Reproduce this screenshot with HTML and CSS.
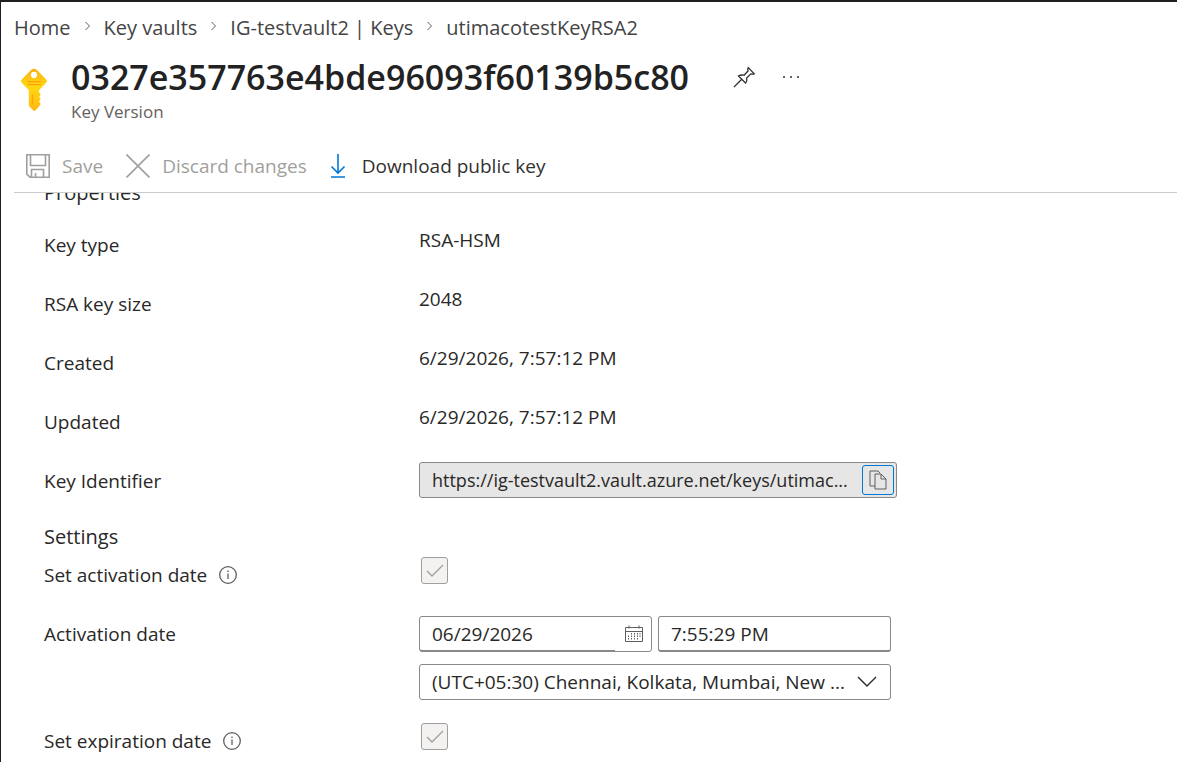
FILE: index.html
```html
<!DOCTYPE html>
<html lang="en">
<head>
<meta charset="utf-8">
<meta name="viewport" content="width=device-width, initial-scale=1">
<title>Key Version</title>
<link rel="stylesheet" href="styles.css">
</head>
<body>
<nav class="breadcrumb" aria-label="Breadcrumb">
  <a href="#">Home</a>
  <svg class="crumb-sep" viewBox="0 0 6 10" aria-hidden="true"><path d="M1 1l4 4-4 4"/></svg>
  <a href="#">Key vaults</a>
  <svg class="crumb-sep" viewBox="0 0 6 10" aria-hidden="true"><path d="M1 1l4 4-4 4"/></svg>
  <a href="#">IG-testvault2 | Keys</a>
  <svg class="crumb-sep" viewBox="0 0 6 10" aria-hidden="true"><path d="M1 1l4 4-4 4"/></svg>
  <a href="#">utimacotestKeyRSA2</a>
</nav>

<header class="page-header">
  <svg class="key-icon" viewBox="0 0 28 44" aria-hidden="true">
    <defs>
      <linearGradient id="gold" x1="0" y1="0" x2="0" y2="1">
        <stop offset="0" stop-color="#feaf15"/>
        <stop offset=".4" stop-color="#ffd70f"/>
        <stop offset=".7" stop-color="#ffcb12"/>
        <stop offset="1" stop-color="#feb514"/>
      </linearGradient>
    </defs>
    <path fill="url(#gold)" fill-rule="evenodd" d="M25.9 12.2a2.6 2.6 0 0 1 0 3.8l-6.4 6.7c-.5.5-.6 1-.6 1.6v.9l1.5 1.5v1.8l-1.4 1.5 1.4 1.5v1.6l-1.5 1.5 1.5 1.5v1.7l-1.5 1.7-3.3 3.8c-.8.8-1.6.8-2.4 0l-3.800-3.800c-.5-.5-.6-1-.6-1.6V24c0-.6-.2-1.100-.6-1.500L2 16a2.600 2.600 0 0 1 0-3.800L11 3a4.200 4.200 0 0 1 6 0zM14 4.800a3.100 3.100 0 1 0 0 6.200 3.100 3.100 0 0 0 0-6.200z"/>
    <path stroke="#ff9f0a" stroke-width="1.300" stroke-linecap="round" d="M8 14.600h12.500M8 17.600h12.500"/>
    <path stroke="#ffa30f" stroke-width="1.500" stroke-linecap="round" d="M12.500 28v9"/>
  </svg>
  <div>
    <div class="title-row">
      <h1>0327e357763e4bde96093f60139b5c80</h1>
      <button class="icon-button pin" type="button" aria-label="Pin">
        <svg class="pin-icon" viewBox="0 0 24 24" aria-hidden="true"><path d="M2 22l7.500-7.500M6 10.500l8 8M6.500 11c1.700-1 3.600-1.200 5.500-.8l4-4.200c-.4-1.100-.4-2.300.2-3.400l6 6.200c-1 .5-2.200.5-3.400.1L14.700 13c.4 2 0 3.800-1.100 5.200"/></svg>
      </button>
      <button class="icon-button" type="button" aria-label="More">
        <svg class="more-icon" viewBox="0 0 18 4" aria-hidden="true"><circle cx="2" cy="2" r="1"/><circle cx="9" cy="2" r="1"/><circle cx="16" cy="2" r="1"/></svg>
      </button>
    </div>
    <p class="subtitle">Key Version</p>
  </div>
</header>

<div class="toolbar">
  <button class="command" type="button" disabled>
    <svg class="save-icon" viewBox="0 0 24 24" aria-hidden="true"><path d="M.8.8h22.400v22.400H4L.8 20.200zM4.500.8v10.700h15V.8M5.500 23v-7.500h12V23M9.500 23v-4"/></svg>
    <span>Save</span>
  </button>
  <button class="command" type="button" disabled>
    <svg class="discard-icon" viewBox="0 0 24 24" aria-hidden="true"><path d="M.5.5l23 23M23.500.5l-23 23"/></svg>
    <span>Discard changes</span>
  </button>
  <button class="command download" type="button">
    <svg class="download-icon" viewBox="0 0 16 24" aria-hidden="true"><path d="M8 0v19M1.500 12.500L8 19l6.500-6.500M1 23h14"/></svg>
    <span>Download public key</span>
  </button>
</div>

<main class="content">
  <h2 class="properties">Properties</h2>
  <dl class="rows">
    <div class="row"><dt>Key type</dt><dd>RSA-HSM</dd></div>
    <div class="row"><dt>RSA key size</dt><dd>2048</dd></div>
    <div class="row"><dt>Created</dt><dd>6/29/2026, 7:57:12 PM</dd></div>
    <div class="row"><dt>Updated</dt><dd>6/29/2026, 7:57:12 PM</dd></div>
  </dl>
  <div class="row">
    <label for="key-id">Key Identifier</label>
    <div class="field identifier">
      <input id="key-id" type="text" readonly value="https://ig-testvault2.vault.azure.net/keys/utimac...">
      <button class="copy" type="button" aria-label="Copy to clipboard">
        <svg class="copy-icon" viewBox="0 0 18 20" aria-hidden="true"><path d="M6 16H1V1h8l2 2"/><path d="M6 4h6l5 5v10H6zM12 4v5h5"/></svg>
      </button>
    </div>
  </div>

  <h2 class="settings">Settings</h2>
  <div class="row">
    <div class="label-group">
      <label for="set-activation">Set activation date</label>
      <svg class="info-icon" viewBox="0 0 18 18" aria-hidden="true"><circle cx="9" cy="9" r="8.300"/><path d="M9 7.500V13M9 4.500V6"/></svg>
    </div>
    <div class="check">
      <input id="set-activation" type="checkbox" checked disabled>
      <svg viewBox="0 0 18 14" aria-hidden="true"><path d="M1 7l5 5L17 1"/></svg>
    </div>
  </div>
  <div class="row">
    <label for="activation-date">Activation date</label>
    <div class="date-fields">
      <div class="field date">
        <input id="activation-date" type="text" value="06/29/2026">
        <button class="calendar" type="button" aria-label="Choose date">
          <svg class="calendar-icon" viewBox="0 0 18 18" aria-hidden="true"><path d="M.5 2.500h17v14H.5zM.5 6.500h17M4 .5v3M14 .5v3"/><path stroke-dasharray="1.500 1" d="M6.500 8v7.500M9.500 8v7.500M12.500 8v7.500M15 8v5M3.500 10.500v5"/></svg>
        </button>
      </div>
      <div class="field time"><input type="text" aria-label="Activation time" value="7:55:29 PM"></div>
      <div class="field zone">
        <select aria-label="Time zone"><option>(UTC+05:30) Chennai, Kolkata, Mumbai, New ...</option></select>
        <svg class="chevron" viewBox="0 0 20 12" aria-hidden="true"><path d="M1 1l9 9 9-9"/></svg>
      </div>
    </div>
  </div>
  <div class="row">
    <div class="label-group">
      <label for="set-expiration">Set expiration date</label>
      <svg class="info-icon" viewBox="0 0 18 18" aria-hidden="true"><circle cx="9" cy="9" r="8.300"/><path d="M9 7.500V13M9 4.500V6"/></svg>
    </div>
    <div class="check">
      <input id="set-expiration" type="checkbox" checked disabled>
      <svg viewBox="0 0 18 14" aria-hidden="true"><path d="M1 7l5 5L17 1"/></svg>
    </div>
  </div>
</main>
</body>
</html>
```

FILE: styles.css
```css
* { box-sizing: border-box; }

body {
  display: flex;
  flex-direction: column;
  height: 100vh;
  margin: 0;
  overflow: hidden;
  border-top: 2px solid #201f1f;
  border-left: 1px solid #201f1f;
  background: #fff;
  color: #292827;
  font: 19px/30px "Segoe UI", "Open Sans", "Noto Sans", sans-serif;
}

h1, h2, p, dl, dd { margin: 0; }

button, input, select { font: inherit; color: inherit; }

button {
  display: flex;
  align-items: center;
  padding: 0;
  border: 0;
  background: none;
}

svg { flex: none; fill: none; stroke: currentColor; }

.breadcrumb {
  display: flex;
  align-items: center;
  gap: 13px;
  padding: 11px 13px 0;
  font-size: 20px;
}

.breadcrumb a { color: #444; text-decoration: none; white-space: nowrap; }

.crumb-sep { width: 7px; height: 10px; margin-bottom: 4px; color: #605e5c; }

.page-header {
  display: flex;
  gap: 23px;
  padding: 12px 19px 0;
}

.key-icon { width: 28px; height: 44px; margin-top: 12px; stroke: none; }

.title-row { display: flex; align-items: center; }

h1 {
  font-size: 34px;
  font-weight: 600;
  line-height: 44px;
  color: #222;
}

.icon-button { color: #323130; }
.pin { margin: 0 26px 0 43px; }
.pin-icon { width: 24px; height: 24px; stroke-width: 1.3; }
.more-icon { width: 18px; height: 4px; fill: currentColor; stroke: none; }

.subtitle { font-size: 17px; line-height: 26px; color: #646260; }

.toolbar {
  display: flex;
  gap: 23px;
  margin-left: 13px;
  padding: 26px 12px 11px;
  border-bottom: 1px solid #ccc;
}

.command { gap: 12px; white-space: nowrap; color: #323130; }
.command:disabled { color: #a19f9d; }
.save-icon { width: 24px; height: 24px; stroke-width: 1.6; }
.discard-icon { width: 24px; height: 24px; stroke-width: 1.6; }
.download-icon { width: 16px; height: 24px; color: #0078d4; stroke-width: 1.6; }
.download { gap: 16px; }

.content {
  flex: 1;
  min-height: 0;
  padding-left: 43px;
  overflow: hidden;
}

h2 { font-size: 20px; font-weight: 400; line-height: 30px; }
.properties { margin: -15px 0 17px; }
.settings { margin-top: 2px; margin-bottom: 3px; }

.row {
  display: grid;
  grid-template-columns: 375px minmax(0, 1fr);
  align-items: start;
  min-height: 59px;
}

.row > dt, .row > label, .label-group { padding-top: 5px; }

.label-group { display: flex; align-items: center; gap: 12px; }
.info-icon { width: 18px; height: 18px; color: #605e5c; stroke-width: 1.3; }

.field {
  display: flex;
  height: 36px;
  border: 1px solid #8a8886;
  border-radius: 3px;
  background: #fff;
}

.field input {
  flex: 1;
  min-width: 0;
  padding: 0 0 0 12px;
  border: 0;
  background: none;
  outline: 0;
}

.identifier {
  align-items: center;
  max-width: 478px;
  margin-top: 1px;
  padding-right: 2px;
  background: #e6e6e6;
}

.identifier input { font-size: 18px; }

.copy {
  justify-content: center;
  width: 32px;
  height: 30px;
  border: 1px solid #0078d4;
  border-radius: 3px;
}

.copy-icon { width: 18px; height: 20px; color: #605e5c; }

.check { display: grid; width: 27px; height: 27px; margin: 2px; }
.check > * { grid-area: 1 / 1; place-self: center; }

.check input {
  width: 27px;
  height: 27px;
  margin: 0;
  appearance: none;
  border: 1px solid #a19f9d;
  border-radius: 3px;
  background: #f3f2f1;
}

.check svg { z-index: 1; width: 18px; height: 14px; color: #a19f9d; stroke-width: 1.3; pointer-events: none; }

.date-fields {
  display: grid;
  grid-template-columns: repeat(2, minmax(0, 1fr));
  gap: 12px 6px;
  max-width: 472px;
  padding: 2px 0 21px;
}

.date input, .time { border-bottom: 2px solid #8a8886; }
.date { padding-right: 8px; }
.date input { margin-bottom: -1px; border-radius: 0 0 0 3px; }
.time input { margin-bottom: -1px; }
.calendar { margin-left: 10px; }
.calendar-icon { width: 18px; height: 18px; color: #605e5c; }

.zone { display: grid; grid-column: 1 / -1; }
.zone > * { grid-area: 1 / 1; }

.zone select {
  width: 100%;
  padding: 0 40px 0 12px;
  appearance: none;
  border: 0;
  background: none;
  outline: 0;
}

.chevron {
  place-self: center end;
  width: 20px;
  height: 12px;
  margin-right: 13px;
  stroke-width: 1.4;
  pointer-events: none;
}
```
